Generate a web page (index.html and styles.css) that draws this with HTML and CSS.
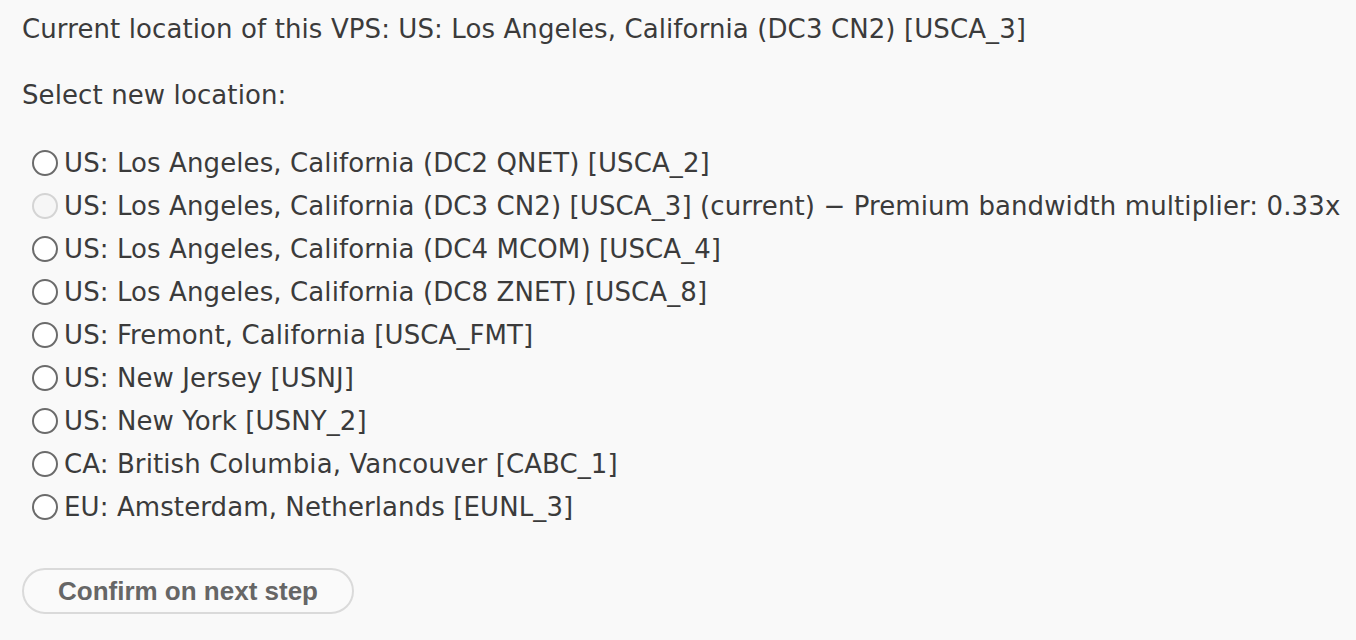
FILE: index.html
```html
<!DOCTYPE html>
<html>
<head>
  <title>Change VPS location</title>
  <link rel="stylesheet" href="styles.css">
</head>
<body>
  <form class="migrate">
    <p class="current">Current location of this VPS: US: Los Angeles, California (DC3 CN2) [USCA_3]</p>
    <p class="prompt">Select new location:</p>

    <div class="locations">
      <label class="loc"><input type="radio" name="loc" value="USCA_2"><span>US: Los Angeles, California (DC2 QNET) [USCA_2]</span></label>
      <label class="loc"><input type="radio" name="loc" value="USCA_3" disabled><span>US: Los Angeles, California (DC3 CN2) [USCA_3] (current) &minus; Premium bandwidth multiplier: 0.33x</span></label>
      <label class="loc"><input type="radio" name="loc" value="USCA_4"><span>US: Los Angeles, California (DC4 MCOM) [USCA_4]</span></label>
      <label class="loc"><input type="radio" name="loc" value="USCA_8"><span>US: Los Angeles, California (DC8 ZNET) [USCA_8]</span></label>
      <label class="loc"><input type="radio" name="loc" value="USCA_FMT"><span>US: Fremont, California [USCA_FMT]</span></label>
      <label class="loc"><input type="radio" name="loc" value="USNJ"><span>US: New Jersey [USNJ]</span></label>
      <label class="loc"><input type="radio" name="loc" value="USNY_2"><span>US: New York [USNY_2]</span></label>
      <label class="loc"><input type="radio" name="loc" value="CABC_1"><span>CA: British Columbia, Vancouver [CABC_1]</span></label>
      <label class="loc"><input type="radio" name="loc" value="EUNL_3"><span>EU: Amsterdam, Netherlands [EUNL_3]</span></label>
    </div>

    <button type="button" class="confirm">Confirm on next step</button>
  </form>
</body>
</html>
```

FILE: styles.css
```css
body {
  margin: 0;
  background-color: #f9f9f9;
  color: #3b3b3b;
  font-family: "DejaVu Sans", Verdana, sans-serif;
  font-size: 26px;
  letter-spacing: 0.1px;
}

.migrate {
  display: flex;
  flex-direction: column;
  align-items: flex-start;
  padding: 8px 0 0 22px;
}

.current,
.prompt {
  margin: 0;
  line-height: 43px;
}

.prompt {
  margin-top: 23px;
}

.locations {
  display: flex;
  flex-direction: column;
  margin-top: 24px;
  padding-left: 10px;
}

.loc {
  display: flex;
  align-items: center;
  gap: 6px;
  height: 43px;
}

.loc input {
  appearance: none;
  -webkit-appearance: none;
  width: 26px;
  height: 26px;
  margin: 0;
  border: 2px solid #6b6b6b;
  border-radius: 50%;
  background-color: #fff;
  flex-shrink: 0;
}

.loc input:disabled {
  border-color: #d4d4d4;
  background-color: #f6f6f6;
}

.confirm {
  margin-top: 40px;
  width: 332px;
  height: 46px;
  border: 2px solid #dadada;
  border-radius: 23px;
  background-color: #fafafa;
  color: #666;
  font-family: "Liberation Sans", Arial, sans-serif;
  font-weight: bold;
  font-size: 26px;
  letter-spacing: 0;
}
```
